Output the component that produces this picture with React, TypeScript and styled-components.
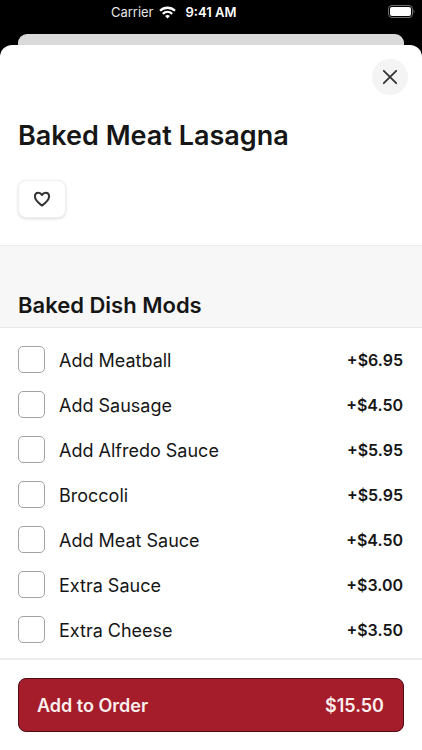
import React from "react";
import styled, { createGlobalStyle } from "styled-components";

const GlobalStyle = createGlobalStyle`
  *, *::before, *::after { box-sizing: border-box; }
  body {
    margin: 0;
    background: #000;
    color: #161616;
    font-family: Inter, "Liberation Sans", sans-serif;
  }
  h1, h2, ul { margin: 0; padding: 0; }
  button { font-family: inherit; cursor: pointer; }
`;

const Screen = styled.div`
  display: flex;
  flex-direction: column;
  min-height: 100vh;
  background: #000;
`;

const StatusBar = styled.header`
  display: grid;
  grid-template-columns: 1fr auto 1fr;
  align-items: center;
  height: 24px;
  margin-bottom: 10px;
  padding: 0 7px;
  color: #fff;
  font-size: 13px;
  line-height: 16px;
`;

const Carrier = styled.div`
  display: flex;
  justify-content: flex-end;
  align-items: center;
  gap: 5px;
  padding-right: 10px;
  color: #e6e6e6;
`;

const Clock = styled.time`
  font-weight: 600;
`;

const BatterySlot = styled.div`
  display: flex;
  justify-content: flex-end;
`;

const BackCard = styled.div`
  height: 11px;
  margin: 0 18px;
  border-radius: 9px 9px 0 0;
  background: #dadada;
`;

const Sheet = styled.main`
  display: flex;
  flex: 1;
  flex-direction: column;
  border-radius: 12px 12px 0 0;
  background: #fff;
`;

const DishHeader = styled.section`
  display: flex;
  flex-direction: column;
  align-items: flex-start;
  padding: 14px 14px 27px 18px;
`;

const CloseButton = styled.button`
  display: flex;
  align-items: center;
  justify-content: center;
  align-self: flex-end;
  width: 36px;
  height: 36px;
  padding: 0;
  border: 0;
  border-radius: 50%;
  background: #f4f4f4;
  color: #333;
`;

const DishTitle = styled.h1`
  margin: 24px 0 28px;
  font-size: 27px;
  font-weight: 600;
  line-height: 33px;
`;

const FavoriteButton = styled.button`
  display: flex;
  align-items: center;
  justify-content: center;
  width: 48px;
  height: 38px;
  padding: 0;
  border: 1px solid #f0f0f0;
  border-radius: 8px;
  background: #fff;
  box-shadow: 0 1px 3px rgba(0, 0, 0, 0.14);
  color: #333;
`;

const GroupHeader = styled.div`
  padding: 45px 18px 8px;
  border-top: 1px solid #ececec;
  border-bottom: 1px solid #e9e9e9;
  background: #f7f7f7;
`;

const GroupTitle = styled.h2`
  font-size: 22px;
  font-weight: 600;
  line-height: 28px;
`;

const OptionList = styled.ul`
  flex: 1;
  padding: 9px 19px 6px 18px;
  list-style: none;
`;

const OptionRow = styled.label`
  display: flex;
  align-items: center;
  height: 45px;
  gap: 14px;
  cursor: pointer;
`;

const CheckBox = styled.input`
  appearance: none;
  flex: none;
  width: 27px;
  height: 27px;
  margin: 0;
  border: 1px solid #a3a3a3;
  border-radius: 5px;
  background: #fff;

  &:checked {
    border-color: #a51d2a;
    background: #a51d2a;
    box-shadow: inset 0 0 0 5px #fff;
  }
`;

const OptionName = styled.span`
  flex: 1;
  padding-top: 2px;
  font-size: 18px;
  line-height: 24px;
`;

const OptionPrice = styled.span`
  font-size: 16px;
  font-weight: 600;
  line-height: 24px;
`;

const Footer = styled.footer`
  padding: 18px;
  border-top: 2px solid #ededed;
  background: #fff;
`;

const OrderButton = styled.button`
  display: flex;
  align-items: center;
  justify-content: space-between;
  width: 100%;
  height: 54px;
  padding: 1px 19px 0 18px;
  border: 1px solid #4f0d16;
  border-radius: 8px;
  background: #a51d2a;
  color: #fbeeee;
  font-size: 18px;
  font-weight: 600;
  line-height: 24px;
`;

const WifiIcon = () => (
  <svg width="17" height="13" viewBox="0 0 17 13" fill="none" stroke="#fff" strokeWidth="2.3" aria-hidden="true">
    <path d="M1 4.8C5.2.7 11.8.7 16 4.8" />
    <path d="M3.8 7.8c2.7-2.5 6.7-2.5 9.4 0" />
    <path d="M6.1 10c1.4-1.2 3.4-1.2 4.8 0L8.5 12.6z" fill="#fff" stroke="none" />
  </svg>
);

const BatteryIcon = () => (
  <svg width="27" height="14" viewBox="0 0 27 14" fill="none" role="img" aria-label="Battery full">
    <rect x="0.5" y="0.5" width="24" height="12" rx="3.5" stroke="#707070" />
    <rect x="2" y="2" width="21" height="9" rx="2" fill="#fff" />
    <path d="M25.6 4.5c1.2.7 1.2 3.2 0 4z" fill="#707070" />
  </svg>
);

const CloseIcon = () => (
  <svg width="16" height="16" viewBox="0 0 16 16" fill="none" stroke="currentColor" strokeWidth="1.8" strokeLinecap="round" aria-hidden="true">
    <path d="M1.8 1.8l12.4 12.4M14.2 1.8L1.8 14.2" />
  </svg>
);

const HeartIcon = () => (
  <svg width="18" height="16" viewBox="0 0 18 16" fill="none" stroke="currentColor" strokeWidth="2" strokeLinejoin="round" aria-hidden="true">
    <path d="M9 14.6C5.2 11.9 1.9 9.1 1.9 5.6c0-2.3 1.5-3.9 3.5-3.9C7 1.7 8.2 2.5 9 4c.8-1.5 2-2.300 3.600-2.300 2 0 3.500 1.600 3.500 3.900 0 3.500-3.300 6.300-7.100 9z" />
  </svg>
);

const options = [
  { name: "Add Meatball", price: "+$6.95" },
  { name: "Add Sausage", price: "+$4.50" },
  { name: "Add Alfredo Sauce", price: "+$5.95" },
  { name: "Broccoli", price: "+$5.95" },
  { name: "Add Meat Sauce", price: "+$4.50" },
  { name: "Extra Sauce", price: "+$3.00" },
  { name: "Extra Cheese", price: "+$3.50" },
];

export default function App() {
  return (
    <>
      <GlobalStyle />
      <Screen>
        <StatusBar>
          <Carrier>
            Carrier
            <WifiIcon />
          </Carrier>
          <Clock>9:41 AM</Clock>
          <BatterySlot>
            <BatteryIcon />
          </BatterySlot>
        </StatusBar>
        <BackCard />
        <Sheet>
          <DishHeader>
            <CloseButton type="button" aria-label="Close">
              <CloseIcon />
            </CloseButton>
            <DishTitle>Baked Meat Lasagna</DishTitle>
            <FavoriteButton type="button" aria-label="Add to favorites">
              <HeartIcon />
            </FavoriteButton>
          </DishHeader>
          <GroupHeader>
            <GroupTitle>Baked Dish Mods</GroupTitle>
          </GroupHeader>
          <OptionList>
            {options.map((option) => (
              <li key={option.name}>
                <OptionRow>
                  <CheckBox type="checkbox" />
                  <OptionName>{option.name}</OptionName>
                  <OptionPrice>{option.price}</OptionPrice>
                </OptionRow>
              </li>
            ))}
          </OptionList>
          <Footer>
            <OrderButton type="button">
              <span>Add to Order</span>
              <span>$15.50</span>
            </OrderButton>
          </Footer>
        </Sheet>
      </Screen>
    </>
  );
}
